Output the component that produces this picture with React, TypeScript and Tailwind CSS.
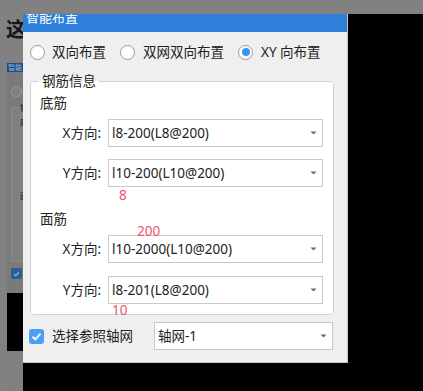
import React from "react";

const FONT = '"Noto Sans", "Noto Sans CJK SC", sans-serif';

function Radio({ checked }: { checked?: boolean }) {
  return (
    <span className="flex h-[15px] w-[15px] shrink-0 items-center justify-center rounded-full border border-[#9a9a9a] bg-white">
      {checked ? <span className="h-[8px] w-[8px] rounded-full bg-[#3b93f3]" /> : null}
    </span>
  );
}

function Caret() {
  return (
    <svg width="7" height="4" viewBox="0 0 7 4" className="shrink-0">
      <path d="M0.5 0.5h6L3.5 3.5z" fill="#6b6b6b" />
    </svg>
  );
}

function Select({ value, width }: { value: string; width: number }) {
  return (
    <div
      className="flex h-[28px] items-center justify-between border border-[#c9c9c9] bg-white pl-[3px] pr-[5px] text-[13.5px] text-[#222]"
      style={{ width }}
    >
      <span className="whitespace-nowrap">{value}</span>
      <Caret />
    </div>
  );
}

function Row({
  label,
  value,
  note,
}: {
  label: string;
  value: string;
  note?: { text: string; cls: string };
}) {
  return (
    <div className="flex items-center">
      <div className="w-[71px] pr-[1px] text-right text-[13.5px] text-[#222]">{label}</div>
      <div className="relative ml-[6px]">
        <Select value={value} width={215} />
        {note ? (
          <span className={`absolute text-[13.5px] leading-[14px] text-[#f2506b] ${note.cls}`}>
            {note.text}
          </span>
        ) : null}
      </div>
    </div>
  );
}

// the page behind the dialog, only its left edge shows
function BehindStrip() {
  return (
    <div className="flex h-full w-[23px] flex-col">
      <div className="h-[20px]" />
      <div className="ml-[6px] text-[20px] font-bold leading-[20px] text-[#151515]">这</div>
      <div className="h-[23px]" />
      <div className="ml-[7px] flex h-[9px] items-center overflow-hidden bg-[#1c4e86] pl-[1px] text-[7px] leading-[7px] text-[#9fb5cf]">
        智能
      </div>
      <div className="ml-[7px] flex flex-1 flex-col bg-[#7a7a7a]">
        <div className="ml-[4px] mt-[14px] h-[11px] w-[11px] rounded-full border border-[#9a9a9a] bg-[#808080]" />
        <div className="ml-[4px] mt-[10px] h-[155px] rounded-tl-[3px] border-l border-t border-b border-[#8a8a8a] bg-[#808080] pl-[8px] text-[8px] leading-[10px] text-[#111]">
          <div className="-mt-[5px]">钢</div>
          <div className="mt-[4px]">底</div>
          <div className="mt-[64px]">面</div>
        </div>
        <div className="ml-[4px] mt-[6px] flex h-[11px] w-[11px] items-center justify-center rounded-[2px] bg-[#2a5d93]">
          <svg width="7" height="6" viewBox="0 0 7 6">
            <path d="M1 3l1.7 1.7L6 1.2" stroke="#8fb0d4" strokeWidth="1.3" fill="none" />
          </svg>
        </div>
        <div className="h-[14px]" />
        <div className="h-[58px] bg-black" />
        <div className="flex-1 bg-[#808080]" />
      </div>
    </div>
  );
}

export default function App() {
  return (
    <div
      className="relative h-[391px] w-[423px] overflow-hidden bg-[#818181]"
      style={{ fontFamily: FONT }}
    >
      <div className="absolute left-0 top-0 h-[391px] w-[23px]">
        <BehindStrip />
      </div>
      <div className="absolute bottom-0 left-[23px] right-0 top-[14px] bg-black" />

      <div className="absolute left-[23px] top-[14px] flex h-[349px] w-[325px] flex-col border-r border-b border-[#c4c7cb] bg-[#efefef]">
        <div className="h-[18px] overflow-hidden bg-[#2d7fd9] pl-[3px]">
          <div className="-mt-[5px] text-[13px] leading-[16px] text-white">智能布置</div>
        </div>

        <div className="flex h-[40px] items-center pl-[7px] text-[13.5px] text-[#222]">
          <label className="flex items-center gap-[7px]">
            <Radio />
            <span>双向布置</span>
          </label>
          <label className="ml-[14px] flex items-center gap-[8px]">
            <Radio />
            <span>双网双向布置</span>
          </label>
          <label className="ml-[14px] flex items-center gap-[8px]">
            <Radio checked />
            <span>XY 向布置</span>
          </label>
        </div>

        <fieldset className="mx-[7px] w-[304px] rounded-[4px] border border-[#cfd3d8] bg-white px-0 pb-[10px]">
          <legend className="ml-[8px] px-[3px] text-[13.5px] leading-[18px] text-[#222]">钢筋信息</legend>
          <div className="ml-[9px] mt-[2px] h-[22px] text-[13.5px] leading-[22px] text-[#222]">底筋</div>
          <div className="mt-[5px] flex flex-col gap-[12px]">
            <Row label="X方向:" value="l8-200(L8@200)" />
            <Row
              label="Y方向:"
              value="l10-200(L10@200)"
              note={{ text: "8", cls: "left-[11px] top-[29px]" }}
            />
          </div>
          <div className="ml-[9px] mt-[21px] h-[22px] text-[13.5px] leading-[22px] text-[#222]">面筋</div>
          <div className="mt-[5px] flex flex-col gap-[13px]">
            <Row
              label="X方向:"
              value="l10-2000(L10@200)"
              note={{ text: "200", cls: "left-[29px] -top-[11px]" }}
            />
            <Row
              label="Y方向:"
              value="l8-201(L8@200)"
              note={{ text: "10", cls: "left-[4px] top-[27px]" }}
            />
          </div>
        </fieldset>

        <div className="mt-[7px] flex h-[28px] items-center pl-[6px] pr-[14px]">
          <span className="flex h-[15px] w-[15px] items-center justify-center rounded-[3px] bg-[#4a9ff5]">
            <svg width="11" height="9" viewBox="0 0 11 9">
              <path d="M1.5 4.6l2.8 2.8L9.6 1.6" stroke="white" strokeWidth="1.8" fill="none" />
            </svg>
          </span>
          <span className="ml-[8px] text-[13.5px] text-[#222]">选择参照轴网</span>
          <div className="ml-auto">
            <Select value="轴网-1" width={179} />
          </div>
        </div>
      </div>
    </div>
  );
}
